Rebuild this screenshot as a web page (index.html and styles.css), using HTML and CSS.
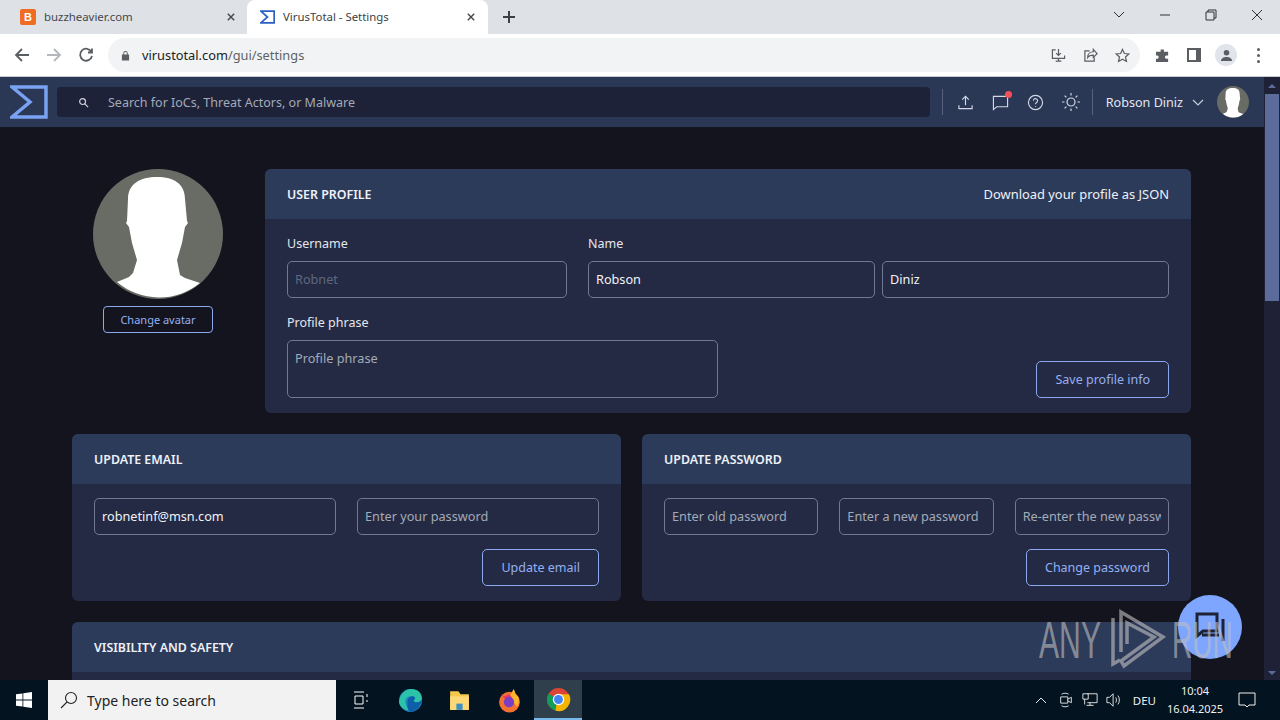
FILE: index.html
```html
<!DOCTYPE html>
<html>
<head>
    <title>VirusTotal - Settings</title>
    <link rel="stylesheet" href="styles.css">
</head>
<body>
    <!-- Browser tabs -->
    <div class="tabbar">
        <div class="tab">
            <span class="favicon-b">B</span>
            <span class="tab-title">buzzheavier.com</span>
            <svg class="tab-close" viewBox="0 0 10 10"><path d="M1 1l8 8M9 1l-8 8"/></svg>
        </div>
        <div class="tab tab-active">
            <svg class="favicon-vt" viewBox="0 0 18 16"><path d="M1 1h16v14H1l8-7z"/></svg>
            <span class="tab-title">VirusTotal - Settings</span>
            <svg class="tab-close" viewBox="0 0 10 10"><path d="M1 1l8 8M9 1l-8 8"/></svg>
        </div>
        <svg class="new-tab" viewBox="0 0 12 12"><path d="M6 0v12M0 6h12"/></svg>
        <div class="window-controls">
            <svg viewBox="0 0 12 8"><path d="M1 1l5 5 5-5"/></svg>
            <svg viewBox="0 0 12 8"><path d="M1 4h10"/></svg>
            <svg viewBox="0 0 12 12"><path d="M1 3h8v8H1zM3 3V1h8v8H9"/></svg>
            <svg viewBox="0 0 12 12"><path d="M1 1l10 10M11 1L1 11"/></svg>
        </div>
    </div>

    <!-- Browser toolbar -->
    <div class="toolbar">
        <svg class="nav-icon" viewBox="0 0 16 16"><path d="M15 8H2M8 2L2 8l6 6"/></svg>
        <svg class="nav-icon nav-off" viewBox="0 0 16 16"><path d="M1 8h13M8 2l6 6-6 6"/></svg>
        <svg class="nav-icon" viewBox="0 0 16 16"><path d="M13.5 5A6 6 0 1 0 14 9M14 1.5V5.5H10"/></svg>
        <div class="omnibox">
            <svg class="lock" viewBox="0 0 10 12"><path d="M1 5h8v6.500H1zM2.500 5V3.500a2.500 2.500 0 0 1 5 0V5h-1V3.500a1.500 1.500 0 0 0-3 0V5z"/></svg>
            <span class="url"><b>virustotal.com</b>/gui/settings</span>
            <div class="omni-actions">
                <svg viewBox="0 0 16 16"><path d="M5 2H1.500v9h13V8M8 1v7M5.500 5.500L8 8l2.500-2.500M5 14h6M8 11v3"/></svg>
                <svg viewBox="0 0 16 16"><path d="M7 3H2v11h10v-4M5 10c0-4 3-6 6-6V1.500L15 6l-4 4V7.500c-3 0-5 1-6 2.500z"/></svg>
                <svg viewBox="0 0 16 16"><path d="M8 1.500l2 4.400 4.700.5-3.500 3.200 1 4.700L8 11.900l-4.200 2.400 1-4.700L1.300 6.400 6 5.900z"/></svg>
            </div>
        </div>
        <svg class="tool-icon tool-fill" viewBox="0 0 16 16"><path d="M6 1.500h3.500v2.500H14v4h-2a1.800 1.800 0 0 0 0 3.500h2V15H1v-3.500h1.500a1.800 1.800 0 0 0 0-3.500H1V4h5z"/></svg>
        <svg class="tool-icon tool-panel" viewBox="0 0 14 14"><path d="M0 0h14v14H0zM2 2v10h7V2z" fill-rule="evenodd"/></svg>
        <div class="profile-chip">
            <svg viewBox="0 0 14 14"><circle cx="7" cy="4" r="3"/><path d="M1 13c0-3 3-4.500 6-4.500s6 1.500 6 4.500z"/></svg>
        </div>
        <div class="kebab"><i></i><i></i><i></i></div>
    </div>

    <div class="viewport">
        <div class="page">
            <!-- App header -->
            <header class="app-header">
                <svg class="vt-logo" viewBox="0 0 38 34"><path d="M2 2h34v30H2l18-15z"/></svg>
                <div class="search">
                    <svg viewBox="0 0 12 12"><circle cx="5" cy="5" r="3.200"/><path d="M7.500 7.500L11 11"/></svg>
                    <span>Search for IoCs, Threat Actors, or Malware</span>
                </div>
                <div class="header-sep"></div>
                <svg class="hd-icon" viewBox="0 0 18 18"><path d="M9 12V3M5.500 6L9 2.500 12.500 6M2 12v3.500h14V12"/></svg>
                <div class="hd-chat">
                    <svg class="hd-icon" viewBox="0 0 18 18"><path d="M1.500 2.500h15v11H5l-3.500 3z"/></svg>
                    <span class="dot"></span>
                </div>
                <svg class="hd-icon" viewBox="0 0 18 18"><circle cx="9" cy="9" r="7.500"/><path d="M6.800 7a2.200 2.200 0 1 1 3.300 2c-.8.500-1.100 1-1.100 1.800M9 12.600v.8"/></svg>
                <svg class="hd-icon hd-sun" viewBox="0 0 20 20"><circle cx="10" cy="10" r="4"/><path d="M10 1v2.500M10 16.500V19M1 10h2.500M16.500 10H19M3.600 3.600l1.800 1.800M14.600 14.600l1.800 1.800M3.600 16.400l1.800-1.800M14.600 5.400l1.800-1.800"/></svg>
                <div class="header-sep header-sep-user"></div>
                <span class="user-name">Robson Diniz</span>
                <svg class="user-caret" viewBox="0 0 12 7"><path d="M1 1l5 5 5-5"/></svg>
                <svg class="avatar-small" viewBox="0 0 130 130"><use href="#silhouette"/></svg>
            </header>

            <main class="content">
                <div class="profile-row">
                    <div class="avatar-col">
                        <svg class="avatar" viewBox="0 0 130 130">
                            <g id="silhouette">
                                <circle cx="65" cy="65" r="65" fill="#696c65"/>
                                <path d="M24 113l12-5 4-4 4-13-5-17-3-16-3-4 1-2 1-22C35 15 47 8 64 8s28 7 28 22l2 22 1 2-3 4-3 16-5 17 3 15 5 3 15 5a65 65 0 0 1-83-1z" fill="#fff"/>
                            </g>
                        </svg>
                        <button class="btn btn-small">Change avatar</button>
                    </div>
                    <section class="panel panel-profile">
                        <div class="panel-head">
                            <h2>USER PROFILE</h2>
                            <span class="json-link">Download your profile as JSON</span>
                        </div>
                        <div class="panel-body profile-body">
                            <div class="field-user">
                                <label>Username</label>
                                <div class="input input-muted"><span>Robnet</span></div>
                            </div>
                            <div class="field-name">
                                <label>Name</label>
                                <div class="name-inputs">
                                    <div class="input input-filled"><span>Robson</span></div>
                                    <div class="input input-filled"><span>Diniz</span></div>
                                </div>
                            </div>
                            <div class="field-phrase">
                                <label>Profile phrase</label>
                                <div class="input textarea"><span>Profile phrase</span></div>
                            </div>
                            <button class="btn save-btn">Save profile info</button>
                        </div>
                    </section>
                </div>

                <div class="two-cols">
                    <section class="panel">
                        <div class="panel-head"><h2>UPDATE EMAIL</h2></div>
                        <div class="panel-body">
                            <div class="input-row input-row-2">
                                <div class="input input-filled"><span>robnetinf@msn.com</span></div>
                                <div class="input"><span>Enter your password</span></div>
                            </div>
                            <div class="actions"><button class="btn">Update email</button></div>
                        </div>
                    </section>
                    <section class="panel">
                        <div class="panel-head"><h2>UPDATE PASSWORD</h2></div>
                        <div class="panel-body">
                            <div class="input-row input-row-3">
                                <div class="input"><span>Enter old password</span></div>
                                <div class="input"><span>Enter a new password</span></div>
                                <div class="input"><span>Re-enter the new password</span></div>
                            </div>
                            <div class="actions"><button class="btn">Change password</button></div>
                        </div>
                    </section>
                </div>

                <section class="panel">
                    <div class="panel-head"><h2>VISIBILITY AND SAFETY</h2></div>
                    <div class="panel-body panel-rest"></div>
                </section>
            </main>
        </div>

        <div class="scrollbar">
            <span class="arrow-up"></span>
            <div class="thumb"></div>
            <span class="arrow-down"></span>
        </div>

        <!-- Floating chat button and sandbox watermark -->
        <div class="chat-fab">
            <svg viewBox="0 0 34 30"><path d="M4 2h20v17H10l-6 5zM9 23h17M30 7v22"/></svg>
        </div>
        <div class="watermark">
            <span class="wm-any">ANY</span>
            <svg viewBox="0 0 60 64"><path d="M5 10v46l7-4M13 44V4l42 25-39 29-3-5 33-24-27-14v21"/></svg>
            <span class="wm-run">RUN</span>
        </div>
    </div>

    <!-- Windows taskbar -->
    <footer class="taskbar">
        <svg class="start" viewBox="0 0 16 16"><path d="M0 2.300l6.500-.9v6.100H0zM7.300 1.300L16 0v7.500H7.300zM0 8.400h6.500v6.200L0 13.700zM7.300 8.400H16V16l-8.700-1.200z"/></svg>
        <div class="task-search">
            <svg viewBox="0 0 18 18"><circle cx="11" cy="7" r="5.500"/><path d="M7 11l-6 6"/></svg>
            <span>Type here to search</span>
        </div>
        <div class="task-item">
            <svg class="task-view" viewBox="0 0 16 18"><path d="M1 1h10M1 17h10M2 5h8v8H2zM14 3v3M14 9v2"/></svg>
        </div>
        <div class="task-item">
            <svg viewBox="0 0 24 24">
                <circle cx="12" cy="12" r="11" fill="#1b8ec9"/>
                <path d="M1 13C2 5 8 1 13 1c6 0 10 4 10 9 0 3-3 4-6 4-2 0-3-1-3-2 2-1 1-4-2-4-5 0-6 5-4 9 1 3 4 4 7 4-8 2-14-3-14-8z" fill="#2cc3a8"/>
                <path d="M9 14c0-4 2-6 5-6 3 0 3 3 1 4 0 2 5 3 8-1-1 7-6 12-11 12-3-1-3-5-3-9z" fill="#0f5ea8"/>
            </svg>
        </div>
        <div class="task-item">
            <svg viewBox="0 0 24 24">
                <path d="M3 3h8l2 3h8v15H3z" fill="#f5c84c"/>
                <path d="M3 8h18v13H3z" fill="#fbd977"/>
                <path d="M9 15h6v6H9z" fill="#3b8fc4"/>
            </svg>
        </div>
        <div class="task-item">
            <svg viewBox="0 0 24 24">
                <circle cx="12" cy="13.500" r="10" fill="#f3702f"/>
                <path d="M16 1c2 3 1 5 4 7 2 3 1 8-1 10L12 8z" fill="#fdb52a"/>
                <path d="M4 6l3 2 5-2 3 4-6 2z" fill="#e8356b"/>
                <circle cx="11.500" cy="13.500" r="5" fill="#7a3fc4"/>
            </svg>
        </div>
        <div class="task-item task-active">
            <svg viewBox="0 0 24 24">
                <circle cx="12" cy="12" r="11" fill="#db4437"/>
                <path d="M12 12L2.500 6.500A11 11 0 0 0 9 22.600z" fill="#0f9d58"/>
                <path d="M12 7h10a11 11 0 0 1-13 15.600z" fill="#f4b400"/>
                <circle cx="12" cy="12" r="5.500" fill="#fff"/>
                <circle cx="12" cy="12" r="4.300" fill="#4285f4"/>
            </svg>
        </div>
        <div class="tray">
            <svg class="tray-caret" viewBox="0 0 12 7"><path d="M1 6l5-5 5 5"/></svg>
            <svg viewBox="0 0 16 18"><path d="M3 2.500c2-1.500 6-1.500 8 0M3 15.500c2 1.500 6 1.500 8 0M2 5.500h8v7H2zM10 8l4-2v6l-4-2"/></svg>
            <svg viewBox="0 0 18 18"><path d="M6 2h11v10H6M1 2h6v6H1zM3 8v6M9 12v3M5 15h8"/></svg>
            <svg viewBox="0 0 18 18"><path d="M1 6h3l4-4v14l-4-4H1zM11 6c1 2 1 4 0 6M13.500 4c2 3 2 7 0 10"/></svg>
            <span class="lang">DEU</span>
            <div class="clock">
                <span>10:04</span>
                <span>16.04.2025</span>
            </div>
            <svg class="notify" viewBox="0 0 18 18"><path d="M1 2h16v12h-6l-2 2-2-2H1z"/></svg>
        </div>
    </footer>
</body>
</html>
```

FILE: styles.css
```css
* {
    box-sizing: border-box;
}
html, body {
    margin: 0;
    height: 720px;
    overflow: hidden;
}
body {
    display: flex;
    flex-direction: column;
    font-family: "Noto Sans", "Open Sans", sans-serif;
    background: #14141f;
}
svg {
    display: block;
}

/* Browser tabs */
.tabbar {
    height: 34px;
    background: #dee1e6;
    display: flex;
    align-items: flex-end;
    padding-left: 8px;
    flex-shrink: 0;
}
.tab {
    width: 239px;
    height: 34px;
    padding: 0 8px 1px 12px;
    display: flex;
    align-items: center;
    gap: 8px;
    font-size: 11.400px;
    color: #45484d;
}
.tab-active {
    width: 241px;
    padding-left: 13px;
    background: #fff;
    border-radius: 8px 8px 0 0;
    color: #3c4043;
}
.tab-title {
    flex: 1;
    padding-bottom: 1px;
}
.favicon-b {
    width: 16px;
    height: 16px;
    background: #f06c23;
    border-radius: 2px;
    color: #fff;
    font: bold 11px/16px "Liberation Sans", sans-serif;
    text-align: center;
}
.favicon-vt {
    width: 15px;
    height: 14px;
    fill: none;
    stroke: #2b5fc4;
    stroke-width: 2;
}
.tab-close {
    width: 8px;
    height: 8px;
    margin-right: 4px;
    fill: none;
    stroke: #45484d;
    stroke-width: 1.800;
}
.tab-active .tab-close {
    margin-right: 5px;
}
.new-tab {
    width: 12px;
    height: 12px;
    margin: 0 0 11px 15px;
    fill: none;
    stroke: #3c4043;
    stroke-width: 2;
}
.window-controls {
    margin-left: auto;
    align-self: stretch;
    display: flex;
    align-items: center;
    gap: 34px;
    padding: 0 17px 4px 0;
}
.window-controls svg {
    width: 12px;
    height: 12px;
    fill: none;
    stroke: #2f3136;
    stroke-width: 1;
}

/* Browser toolbar */
.toolbar {
    height: 43px;
    background: #fff;
    border-bottom: 1px solid #c8ccd2;
    display: flex;
    align-items: center;
    padding: 0 15px 0 14px;
    flex-shrink: 0;
}
.nav-icon {
    width: 16px;
    height: 16px;
    margin-right: 16px;
    fill: none;
    stroke: #5a5e63;
    stroke-width: 1.800;
}
.nav-off {
    stroke: #b4b7bb;
}
.omnibox {
    width: 1032px;
    height: 34px;
    margin-left: -2px;
    background: #f1f3f4;
    border-radius: 17px;
    padding: 0 10px 0 13px;
    display: flex;
    align-items: center;
    gap: 12px;
}
.lock {
    width: 9px;
    height: 11px;
    fill: #5a5e63;
}
.url {
    font-size: 12.800px;
    color: #5f6368;
}
.url b {
    font-weight: 400;
    color: #202124;
}
.omni-actions {
    margin-left: auto;
    display: flex;
    gap: 17px;
}
.omni-actions svg {
    width: 15px;
    height: 15px;
    fill: none;
    stroke: #5a5e63;
    stroke-width: 1.300;
}
.tool-icon {
    width: 15px;
    height: 15px;
    margin-left: 15px;
    fill: #5a5e63;
}
.tool-panel {
    width: 14px;
    height: 14px;
    margin-left: 17px;
}
.profile-chip {
    width: 22px;
    height: 22px;
    margin-left: 14px;
    border-radius: 50%;
    background: #e1e4ea;
    display: flex;
    align-items: center;
    justify-content: center;
}
.profile-chip svg {
    width: 13px;
    height: 13px;
    fill: #5a5e63;
}
.kebab {
    margin-left: 20px;
    display: flex;
    flex-direction: column;
    gap: 3px;
}
.kebab i {
    width: 3px;
    height: 3px;
    border-radius: 50%;
    background: #5a5e63;
}

/* Page area */
.viewport {
    position: relative;
    height: 603px;
    display: flex;
    overflow: hidden;
    flex-shrink: 0;
}
.page {
    flex: 1;
    min-width: 0;
}
.app-header {
    height: 50px;
    background: #2a3755;
    display: flex;
    align-items: center;
    padding: 0 15px 0 10px;
}
.vt-logo {
    width: 38px;
    height: 34px;
    fill: none;
    stroke: #7aa2f2;
    stroke-width: 3.500;
}
.search {
    width: 873px;
    height: 30px;
    margin-left: 9px;
    background: #1d2238;
    border-radius: 4px;
    display: flex;
    align-items: center;
    gap: 19px;
    padding-left: 21px;
    font-size: 12.500px;
    color: #a3aab8;
}
.search svg {
    width: 11px;
    height: 11px;
    fill: none;
    stroke: #cfd3dc;
    stroke-width: 1.300;
}
.header-sep {
    width: 1px;
    height: 26px;
    margin: 0 14px 0 12px;
    background: #55617d;
}
.header-sep-user {
    margin: 0 13px 0 -5px;
}
.hd-icon {
    width: 17px;
    height: 17px;
    margin-right: 18px;
    fill: none;
    stroke: #d3d8e4;
    stroke-width: 1.200;
}
.hd-sun {
    width: 20px;
    height: 20px;
    margin: 0 16px 0 -1px;
}
.hd-chat {
    position: relative;
}
.dot {
    position: absolute;
    top: -3px;
    right: 15px;
    width: 7px;
    height: 7px;
    border-radius: 50%;
    background: #f4505a;
}
.user-name {
    font-size: 12.600px;
    color: #e2e6f0;
}
.user-caret {
    width: 12px;
    height: 7px;
    margin-left: 9px;
    fill: none;
    stroke: #c9cfdc;
    stroke-width: 1.200;
}
.avatar-small {
    width: 32px;
    height: 32px;
    margin-left: 13px;
}

.content {
    padding: 42px 73px 0 72px;
    display: flex;
    flex-direction: column;
    gap: 21px;
}
.profile-row {
    display: flex;
    gap: 42px;
}
.avatar-col {
    width: 151px;
    display: flex;
    flex-direction: column;
    align-items: center;
    gap: 7px;
    padding-left: 21px;
}
.avatar {
    width: 130px;
    height: 130px;
    flex-shrink: 0;
}
.btn {
    height: 37px;
    padding: 0 18px;
    background: transparent;
    border: 1px solid #8ba8ee;
    border-radius: 5px;
    color: #94b0f2;
    font-family: inherit;
    font-size: 12.500px;
}
.btn-small {
    width: 110px;
    height: 27px;
    padding: 0;
    border-radius: 4px;
    font-size: 11px;
    flex-shrink: 0;
}

/* Panels */
.panel {
    background: #242a43;
    border-radius: 6px;
    flex: 1;
    min-width: 0;
    overflow: hidden;
}
.panel-head {
    height: 50px;
    padding: 0 22px;
    background: #2d3b5b;
    display: flex;
    align-items: center;
    justify-content: space-between;
}
.panel-head h2 {
    margin: 0;
    font-size: 12.400px;
    font-weight: 600;
    color: #eef1f7;
}
.json-link {
    font-size: 12.900px;
    color: #eef1f7;
}
.panel-body {
    padding: 14px 22px 15px;
}
.panel-rest {
    height: 60px;
}
.profile-body {
    height: 194px;
    display: grid;
    grid-template-columns: 280px 1fr;
    grid-template-rows: 79px 1fr;
    column-gap: 21px;
    padding-top: 15px;
}
.field-phrase {
    width: 431px;
    grid-column: 1 / span 2;
    grid-row: 2;
}
.save-btn {
    grid-column: 2;
    grid-row: 2;
    justify-self: end;
    align-self: end;
}
label {
    display: block;
    margin-bottom: 8px;
    padding-top: 1px;
    font-size: 12.500px;
    line-height: 18px;
    color: #e4e7ee;
}
.input {
    height: 37px;
    min-width: 0;
    padding: 0 7px 2px;
    border: 1px solid #6f7a92;
    border-radius: 5px;
    display: flex;
    align-items: center;
    font-size: 12.700px;
    color: #a3aab8;
    white-space: nowrap;
}
.input span {
    min-width: 0;
    overflow: hidden;
}
.input-muted {
    color: #5d6780;
}
.input-filled {
    color: #f0f2f7;
}
.textarea {
    height: 58px;
    align-items: flex-start;
    padding-top: 8px;
}
.name-inputs {
    display: grid;
    grid-template-columns: 287px 287px;
    gap: 7px;
}
.two-cols {
    display: flex;
    gap: 21px;
}
.input-row {
    display: grid;
    gap: 21px;
}
.input-row-2 {
    grid-template-columns: repeat(2, minmax(0, 1fr));
}
.input-row-3 {
    grid-template-columns: repeat(3, minmax(0, 1fr));
}
.actions {
    margin-top: 14px;
    display: flex;
    justify-content: flex-end;
}

/* Scrollbar */
.scrollbar {
    width: 16px;
    background: #1f2236;
    display: flex;
    flex-direction: column;
    align-items: center;
}
.thumb {
    width: 14px;
    height: 207px;
    margin-top: 6px;
    background: #5b6b9a;
}
.arrow-up, .arrow-down {
    width: 0;
    height: 0;
    border-left: 4px solid transparent;
    border-right: 4px solid transparent;
}
.arrow-up {
    margin-top: 7px;
    border-bottom: 4px solid #5b6b9a;
}
.arrow-down {
    margin-top: auto;
    margin-bottom: 5px;
    border-top: 4px solid #5b6b9a;
}

/* Overlays */
.chat-fab {
    position: absolute;
    left: 1178px;
    top: 518px;
    width: 64px;
    height: 64px;
    border-radius: 50%;
    background: #7ea6ff;
    display: flex;
    align-items: center;
    justify-content: center;
}
.chat-fab svg {
    width: 34px;
    height: 30px;
    fill: none;
    stroke: #1d2238;
    stroke-width: 3;
}
.watermark {
    position: absolute;
    left: 1039px;
    top: 531px;
    display: flex;
    align-items: center;
    color: rgba(190, 190, 190, 0.62);
    font-family: "Liberation Sans", sans-serif;
    font-size: 52px;
    line-height: 64px;
}
.wm-any, .wm-run {
    display: inline-block;
    transform-origin: left center;
}
.wm-any {
    width: 69px;
    transform: scaleX(0.58);
}
.wm-run {
    width: 60px;
    margin-left: 4px;
    transform: scaleX(0.54);
}
.watermark svg {
    width: 60px;
    height: 64px;
    flex-shrink: 0;
    fill: none;
    stroke: rgba(190, 190, 190, 0.62);
    stroke-width: 3.500;
}

/* Windows taskbar */
.taskbar {
    height: 40px;
    background: #03131f;
    display: flex;
    align-items: center;
    flex-shrink: 0;
}
.start {
    width: 16px;
    height: 16px;
    margin: 0 16px;
    fill: #fff;
}
.task-search {
    width: 288px;
    height: 40px;
    background: #f2f2f2;
    display: flex;
    align-items: center;
    gap: 9px;
    padding-left: 12px;
    font-size: 14px;
    color: #222;
}
.task-search svg {
    width: 18px;
    height: 18px;
    fill: none;
    stroke: #222;
    stroke-width: 1.100;
}
.task-item {
    width: 49.500px;
    height: 40px;
    display: flex;
    align-items: center;
    justify-content: center;
}
.task-item svg {
    width: 25px;
    height: 25px;
}
.task-item svg.task-view {
    width: 16px;
    height: 18px;
    fill: none;
    stroke: #fff;
    stroke-width: 1;
}
.task-active {
    width: 48px;
    background: #2f3f4c;
    border-bottom: 2px solid #76b9ed;
}
.tray {
    margin-left: auto;
    display: flex;
    align-items: center;
    color: #f0f0f0;
    font-size: 11.500px;
}
.tray svg {
    width: 16px;
    height: 16px;
    margin-right: 8px;
    fill: none;
    stroke: #f0f0f0;
    stroke-width: 1;
}
.tray svg.tray-caret {
    width: 12px;
    height: 7px;
    margin-right: 11px;
}
.lang {
    margin-left: 3px;
}
.clock {
    width: 60px;
    margin-left: 9px;
    display: flex;
    flex-direction: column;
    align-items: center;
    font-size: 11px;
    line-height: 18px;
}
.tray svg.notify {
    width: 18px;
    height: 18px;
    margin: 0 24px 0 13px;
}
```
